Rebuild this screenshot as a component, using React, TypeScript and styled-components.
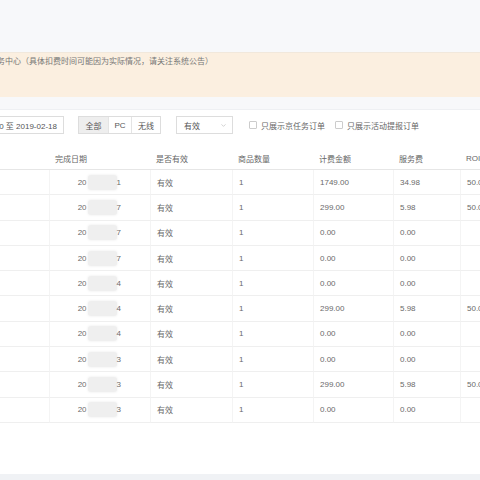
import React from 'react'
import styled, { createGlobalStyle } from 'styled-components'
import { ChevronDown } from 'lucide-react'

const GlobalStyle = createGlobalStyle`
  html, body {
    margin: 0;
    padding: 0;
    overflow: hidden;
    background: #f7f8fa;
  }
  body {
    font-family: "Liberation Sans", "Noto Sans CJK SC", sans-serif;
    font-size: 8px;
    color: #6a6a6a;
  }
`

const Page = styled.div`
  width: 640px;
  margin-left: -60px;
  display: flex;
  flex-direction: column;
  height: 480px;
`

const TopStrip = styled.div`
  height: 52px;
  background: #f7f8fa;
`

const Notice = styled.div`
  height: 45px;
  box-sizing: border-box;
  background: #fbefe0;
  border-top: 1px solid #f1e8dc;
  padding: 3px 0 0 57px;
  line-height: 12px;
  color: #777;
`

const Spacer = styled.div`
  height: 13px;
  background: #f7f8fa;
  border-bottom: 1px solid #eef0f3;
  box-sizing: border-box;
`

const Panel = styled.div`
  background: #fff;
  height: 364px;
  padding: 6px 0 0 10px;
  box-sizing: border-box;
`

const Footer = styled.div`
  flex: 1;
  background: #f0f2f5;
`

const Toolbar = styled.div`
  display: flex;
  align-items: center;
  height: 18px;
`

const DateBox = styled.div`
  width: 114px;
  height: 18px;
  box-sizing: border-box;
  border: 1px solid #ddd;
  display: flex;
  align-items: center;
  justify-content: flex-end;
  padding-right: 6px;
  white-space: nowrap;
  color: #555;
`

const ButtonGroup = styled.div`
  display: flex;
  margin-left: 14px;
  height: 18px;
  border: 1px solid #ddd;
  box-sizing: border-box;
`

const GroupButton = styled.div<{ $active?: boolean; $w: number }>`
  width: ${p => p.$w}px;
  display: flex;
  align-items: center;
  justify-content: center;
  background: ${p => (p.$active ? '#eee' : '#fff')};
  border-left: 1px solid #e4e4e4;
  color: #555;
  &:first-child {
    border-left: none;
  }
`

const Select = styled.div`
  margin-left: 15px;
  width: 57px;
  height: 18px;
  box-sizing: border-box;
  border: 1px solid #ddd;
  display: flex;
  align-items: center;
  justify-content: space-between;
  padding: 0 5px 0 7px;
  color: #555;
`

const CheckLabel = styled.label<{ $gap: number }>`
  margin-left: ${p => p.$gap}px;
  display: flex;
  align-items: center;
  gap: 4px;
  color: #666;
`

const Box = styled.span`
  width: 8px;
  height: 8px;
  box-sizing: border-box;
  border: 1px solid #ccc;
  border-radius: 1px;
  background: #fff;
`

const Table = styled.div`
  margin-top: 13px;
  display: grid;
  grid-template-columns: 99px 101px 82px 81px 80px 67px 80px 60px;
`

const HeadCell = styled.div`
  height: 23px;
  box-sizing: border-box;
  border-bottom: 1px solid #e6e6e6;
  padding-left: 6px;
  display: flex;
  align-items: center;
  color: #666;
  white-space: nowrap;
`

const Cell = styled.div<{ $right?: boolean }>`
  height: 25.3px;
  box-sizing: border-box;
  border-bottom: 1px solid #efefef;
  border-left: 1px solid #f4f4f4;
  display: flex;
  align-items: center;
  justify-content: ${p => (p.$right ? 'flex-end' : 'flex-start')};
  padding: ${p => (p.$right ? '0 29px 0 0' : '0 0 0 6px')};
  color: #6a6a6a;
  white-space: nowrap;
  &:nth-child(8n + 1) {
    border-left: none;
  }
`

const Mask = styled.span`
  display: inline-block;
  width: 29px;
  height: 15px;
  margin-left: 1px;
  background: #efefef;
  border-radius: 3px;
  box-shadow: 0 0 2px 1px #f6f6f6;
`

const headers = ['', '完成日期', '是否有效', '商品数量', '计费金额', '服务费', 'ROI', '']

const rows = [
  { d: '1', amt: '1749.00', fee: '34.98', roi: '50.00' },
  { d: '7', amt: '299.00', fee: '5.98', roi: '50.00' },
  { d: '7', amt: '0.00', fee: '0.00', roi: '' },
  { d: '7', amt: '0.00', fee: '0.00', roi: '' },
  { d: '4', amt: '0.00', fee: '0.00', roi: '' },
  { d: '4', amt: '299.00', fee: '5.98', roi: '50.00' },
  { d: '4', amt: '0.00', fee: '0.00', roi: '' },
  { d: '3', amt: '0.00', fee: '0.00', roi: '' },
  { d: '3', amt: '299.00', fee: '5.98', roi: '50.00' },
  { d: '3', amt: '0.00', fee: '0.00', roi: '' },
]

const App = () => {
  return (
    <>
      <GlobalStyle />
      <Page>
        <TopStrip />
        <Notice>务中心（具体扣费时间可能因为实际情况，请关注系统公告）</Notice>
        <Spacer />
        <Panel>
          <Toolbar>
            <DateBox>2019-01-20 至 2019-02-18</DateBox>
            <ButtonGroup>
              <GroupButton $active $w={29}>全部</GroupButton>
              <GroupButton $w={22}>PC</GroupButton>
              <GroupButton $w={28}>无线</GroupButton>
            </ButtonGroup>
            <Select>
              有效
              <ChevronDown size={7} color="#999" strokeWidth={1.5} />
            </Select>
            <CheckLabel $gap={16}>
              <Box />
              只展示京任务订单
            </CheckLabel>
            <CheckLabel $gap={10}>
              <Box />
              只展示活动提报订单
            </CheckLabel>
          </Toolbar>
          <Table>
            {headers.map((h, i) => (
              <HeadCell key={i}>{h}</HeadCell>
            ))}
            {rows.map((r, i) => (
              <React.Fragment key={i}>
                <Cell />
                <Cell $right>
                  20
                  <Mask />
                  {r.d}
                </Cell>
                <Cell>有效</Cell>
                <Cell>1</Cell>
                <Cell>{r.amt}</Cell>
                <Cell>{r.fee}</Cell>
                <Cell>{r.roi}</Cell>
                <Cell />
              </React.Fragment>
            ))}
          </Table>
        </Panel>
        <Footer />
      </Page>
    </>
  )
}

export default App
